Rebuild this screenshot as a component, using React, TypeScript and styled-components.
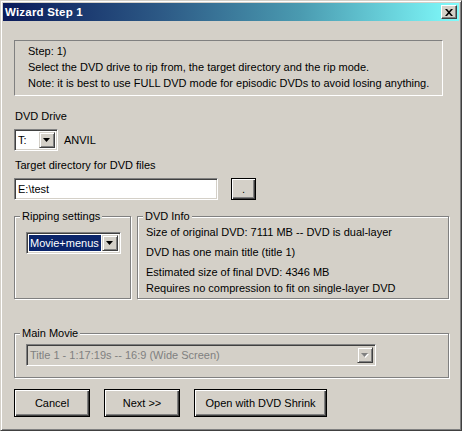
import styled, { createGlobalStyle } from 'styled-components'

const GlobalStyle = createGlobalStyle`
	html, body {
		margin: 0;
		padding: 0;
		background: #d4d0c8;
	}
	body {
		font-family: "Liberation Sans", Arial, sans-serif;
		font-size: 11px;
		color: #000;
	}
	* {
		box-sizing: border-box;
	}
`

const Window = styled.div`
	width: 462px;
	height: 431px;
	background: #d4d0c8;
	border: 1px solid;
	border-color: #d4d0c8 #404040 #404040 #d4d0c8;
	box-shadow: inset 1px 1px #fff, inset -1px -1px #808080;
	padding: 2px;
	display: flex;
	flex-direction: column;
`

const TitleBar = styled.div`
	height: 18px;
	background: linear-gradient(90deg, #0a1a5a 0%, #2d5a86 35%, #4a9ab0 65%, #80fcfc 100%);
	display: flex;
	align-items: center;
	justify-content: space-between;
	padding: 0 2px 0 2px;
`

const TitleText = styled.span`
	color: #fff;
	font-weight: bold;
	font-size: 11.5px;
	line-height: 18px;
	letter-spacing: 0.2px;
`

const CloseButton = styled.div`
	width: 16px;
	height: 14px;
	background: #d4d0c8;
	border: 1px solid;
	border-color: #fff #404040 #404040 #fff;
	box-shadow: inset -1px -1px #808080;
	display: flex;
	align-items: center;
	justify-content: center;
`

const Body = styled.div`
	padding: 19px 0 0 11px;
	display: flex;
	flex-direction: column;
`

const InfoPanel = styled.div`
	width: 429px;
	height: 56px;
	border: 1px solid;
	border-color: #808080 #fff #fff #808080;
	padding: 2px 0 0 13px;
	line-height: 16px;
`

const FieldLabel = styled.div<{ $top: number }>`
	margin-top: ${(p) => p.$top}px;
	line-height: 14px;
	padding-left: 1px;
`

const Row = styled.div<{ $top: number; $gap: number }>`
	margin-top: ${(p) => p.$top}px;
	display: flex;
	align-items: center;
	gap: ${(p) => p.$gap}px;
`

const Sunken = styled.div<{ $width: number; $disabled?: boolean }>`
	width: ${(p) => p.$width}px;
	height: 22px;
	border: 1px solid;
	border-color: #808080 #fff #fff #808080;
	box-shadow: inset 1px 1px #404040, inset -1px -1px #d4d0c8;
	background: ${(p) => (p.$disabled ? '#d4d0c8' : '#fff')};
	padding: 2px;
	display: flex;
	align-items: stretch;
`

const ComboValue = styled.div<{ $selected?: boolean; $disabled?: boolean }>`
	flex: 1;
	display: flex;
	align-items: center;
	padding-left: 1px;
	margin-right: 1px;
	white-space: nowrap;
	overflow: hidden;
	background: ${(p) => (p.$selected ? '#0a246a' : 'transparent')};
	color: ${(p) => (p.$selected ? '#fff' : p.$disabled ? '#808080' : '#000')};
`

const DropButton = styled.div`
	width: 16px;
	background: #d4d0c8;
	border: 1px solid;
	border-color: #d4d0c8 #404040 #404040 #d4d0c8;
	box-shadow: inset 1px 1px #fff, inset -1px -1px #808080;
	display: flex;
	align-items: center;
	justify-content: center;
`

const TextValue = styled.div`
	display: flex;
	align-items: center;
	padding-left: 1px;
`

const PushButton = styled.div<{ $width: number; $height: number }>`
	width: ${(p) => p.$width}px;
	height: ${(p) => p.$height}px;
	border: 1px solid #000;
	box-shadow: inset 1px 1px #fff, inset -1px -1px #404040, inset -2px -2px #808080;
	background: #d4d0c8;
	display: flex;
	align-items: center;
	justify-content: center;
`

const GroupRow = styled.div`
	margin-top: 16px;
	display: flex;
	gap: 6px;
`

const GroupBox = styled.div<{ $width: number; $height: number; $padding: string }>`
	position: relative;
	width: ${(p) => p.$width}px;
	height: ${(p) => p.$height}px;
	border: 1px solid #808080;
	box-shadow: 1px 1px #fff, inset 1px 1px #fff;
	padding: ${(p) => p.$padding};
`

const GroupTitle = styled.span`
	position: absolute;
	top: -8px;
	left: 5px;
	padding: 0 2px;
	line-height: 14px;
	background: #d4d0c8;
`

const InfoLine = styled.div<{ $gap: number }>`
	line-height: 16px;
	margin-top: ${(p) => p.$gap}px;
`

const MovieGroup = styled(GroupBox)`
	margin-top: 34px;
`

const ButtonRow = styled.div`
	margin-top: 11px;
	display: flex;
	gap: 14px;
`

const Arrow = ({ disabled }: { disabled?: boolean }) => (
	<svg width="8" height="5" viewBox="0 0 8 5">
		{disabled && <path d="M1 1h7L4.5 5z" fill="#fff" />}
		<path d="M0 0h7L3.5 4z" fill={disabled ? '#808080' : '#000'} />
	</svg>
)

const Combo = ({
	width,
	value,
	selected,
	disabled,
}: {
	width: number
	value: string
	selected?: boolean
	disabled?: boolean
}) => (
	<Sunken $width={width} $disabled={disabled}>
		<ComboValue $selected={selected} $disabled={disabled}>
			{value}
		</ComboValue>
		<DropButton>
			<Arrow disabled={disabled} />
		</DropButton>
	</Sunken>
)

const App = () => {
	return (
		<>
			<GlobalStyle />
			<Window>
				<TitleBar>
					<TitleText>Wizard Step 1</TitleText>
					<CloseButton>
						<svg width="8" height="7" viewBox="0 0 8 7">
							<path
								d="M0 0h2l2 2.2L6 0h2L5 3.5 8 7H6L4 4.8 2 7H0l3-3.5z"
								fill="#000"
							/>
						</svg>
					</CloseButton>
				</TitleBar>
				<Body>
					<InfoPanel>
						<div>Step: 1)</div>
						<div>Select the DVD drive to rip from, the target directory and the rip mode.</div>
						<div>Note: it is best to use FULL DVD mode for episodic DVDs to avoid losing anything.</div>
					</InfoPanel>

					<FieldLabel $top={13}>DVD Drive</FieldLabel>
					<Row $top={6} $gap={6}>
						<Combo width={44} value="T:" />
						<span>ANVIL</span>
					</Row>

					<FieldLabel $top={7}>Target directory for DVD files</FieldLabel>
					<Row $top={6} $gap={13}>
						<Sunken $width={204}>
							<TextValue>E:\test</TextValue>
						</Sunken>
						<PushButton $width={25} $height={22}>.</PushButton>
					</Row>

					<GroupRow>
						<GroupBox $width={117} $height={83} $padding="15px 0 0 11px">
							<GroupTitle>Ripping settings</GroupTitle>
							<Combo width={95} value="Movie+menus" selected />
						</GroupBox>
						<GroupBox $width={312} $height={83} $padding="7px 0 0 8px">
							<GroupTitle>DVD Info</GroupTitle>
							<InfoLine $gap={0}>Size of original DVD: 7111 MB -- DVD is dual-layer</InfoLine>
							<InfoLine $gap={4}>DVD has one main title (title 1)</InfoLine>
							<InfoLine $gap={4}>Estimated size of final DVD: 4346 MB</InfoLine>
							<InfoLine $gap={0}>Requires no compression to fit on single-layer DVD</InfoLine>
						</GroupBox>
					</GroupRow>

					<MovieGroup $width={435} $height={45} $padding="10px 0 0 11px">
						<GroupTitle>Main Movie</GroupTitle>
						<Combo width={350} value="Title 1 - 1:17:19s -- 16:9 (Wide Screen)" disabled />
					</MovieGroup>

					<ButtonRow>
						<PushButton $width={76} $height={28}>Cancel</PushButton>
						<PushButton $width={76} $height={28}>Next &gt;&gt;</PushButton>
						<PushButton $width={133} $height={28}>Open with DVD Shrink</PushButton>
					</ButtonRow>
				</Body>
			</Window>
		</>
	)
}

export default App
